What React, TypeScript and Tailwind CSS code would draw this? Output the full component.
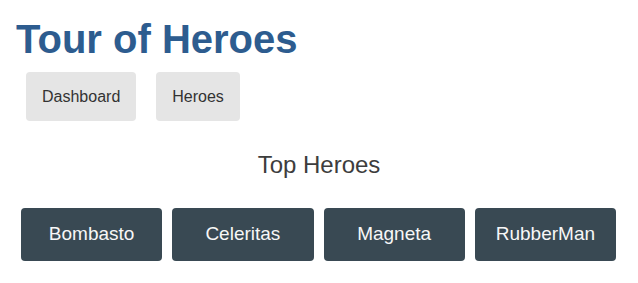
const heroes = ["Bombasto", "Celeritas", "Magneta", "RubberMan"];

const App = () => {
  return (
    <div className="px-4 pt-4 pb-5 bg-white font-['Liberation_Sans',Arial,sans-serif]">
      <h1 className="text-[40px] leading-[46px] font-bold text-[#2d5c8f]">Tour of Heroes</h1>

      <nav className="ml-[10px] mt-[10px] flex gap-5">
        <a className="rounded bg-[#e5e5e5] p-4 text-base leading-[17px] text-[#333]">Dashboard</a>
        <a className="rounded bg-[#e5e5e5] p-4 text-base leading-[17px] text-[#333]">Heroes</a>
      </nav>

      <h2 className="mt-[30px] text-center text-2xl leading-[28px] text-[#3d3d3d]">Top Heroes</h2>

      <div className="ml-[5px] mr-[6px] mt-[29px] grid grid-cols-4 gap-[10px]">
        {heroes.map((hero) => (
          <div
            key={hero}
            className="flex h-[53px] items-center justify-center rounded-sm bg-[#394953] text-[19px] text-[#f7f7f7]"
          >
            {hero}
          </div>
        ))}
      </div>
    </div>
  );
};

export default App;
